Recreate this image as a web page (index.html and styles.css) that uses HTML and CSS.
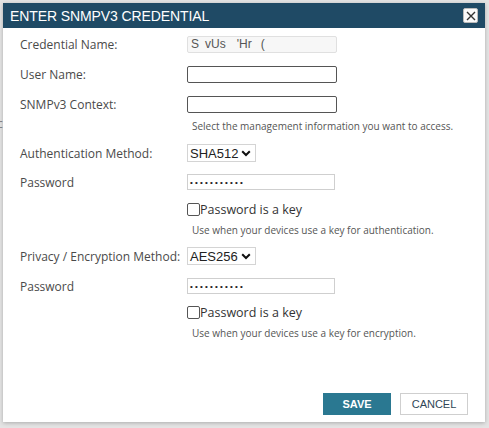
FILE: index.html
```html
<!DOCTYPE html>
<html>
<head>
<meta charset="utf-8">
<link rel="stylesheet" href="styles.css">
</head>
<body>
<span class="behind">c</span>
<div class="dialog">
  <div class="header">
    <span class="title">ENTER SNMPV3 CREDENTIAL</span>
    <span class="close"><svg width="10" height="10" viewBox="0 0 10 10"><path d="M1 1L9 9M9 1L1 9" stroke="#333" stroke-width="1.4" fill="none"/></svg></span>
  </div>
  <div class="form">
    <div class="row r1">
      <label class="label">Credential Name:</label>
      <div class="field disabled">S<span class="gap1"></span>vUs<span class="gap2"></span>'Hr<span class="gap3"></span>(</div>
    </div>
    <div class="row r2">
      <label class="label">User Name:</label>
      <div class="field dark"></div>
    </div>
    <div class="row r3">
      <label class="label">SNMPv3 Context:</label>
      <div class="field dark"></div>
    </div>
    <div class="hint h1">Select the management information you want to access.</div>
    <div class="row r4">
      <label class="label">Authentication Method:</label>
      <div class="select">SHA512<svg class="chev" width="10" height="7" viewBox="0 0 10 7"><path d="M1.2 1.2L5 5L8.8 1.2" stroke="#111" stroke-width="2" fill="none"/></svg></div>
    </div>
    <div class="row r5">
      <label class="label">Password</label>
      <div class="field pwd">&#8226;&#8226;&#8226;&#8226;&#8226;&#8226;&#8226;&#8226;&#8226;&#8226;&#8226;</div>
    </div>
    <div class="check c1"><span class="box"></span>Password is a key</div>
    <div class="hint h2">Use when your devices use a key for authentication.</div>
    <div class="row r6">
      <label class="label">Privacy / Encryption Method:</label>
      <div class="select">AES256<svg class="chev" width="10" height="7" viewBox="0 0 10 7"><path d="M1.2 1.2L5 5L8.8 1.2" stroke="#111" stroke-width="2" fill="none"/></svg></div>
    </div>
    <div class="row r7">
      <label class="label">Password</label>
      <div class="field pwd">&#8226;&#8226;&#8226;&#8226;&#8226;&#8226;&#8226;&#8226;&#8226;&#8226;&#8226;</div>
    </div>
    <div class="check c2"><span class="box"></span>Password is a key</div>
    <div class="hint h3">Use when your devices use a key for encryption.</div>
    <div class="buttons">
      <button class="btn save">SAVE</button>
      <button class="btn cancel">CANCEL</button>
    </div>
  </div>
</div>
</body>
</html>
```
FILE: styles.css
```css
html, body {
  margin: 0;
  padding: 0;
}
body {
  background: #e4e4e4;
  width: 489px;
  height: 428px;
  overflow: hidden;
  position: relative;
  padding-top: 3px;
  padding-left: 3px;
  box-sizing: border-box;
  font-family: "Open Sans", sans-serif;
}
.behind {
  position: absolute;
  left: -3px;
  top: 115px;
  font-size: 12px;
  color: #888;
}
.dialog {
  position: relative;
  width: 482px;
  height: 419px;
  background: #fff;
  box-shadow: 0 1px 4px rgba(0,0,0,0.25);
}
.header {
  height: 25px;
  background: #1f4a65;
  display: flex;
  align-items: center;
  justify-content: space-between;
  padding: 0 7px 0 7px;
}
.title {
  color: #fff;
  font-family: "Liberation Sans", Arial, sans-serif;
  font-size: 14px;
  letter-spacing: -0.1px;
}
.close {
  width: 13px;
  height: 13px;
  background: #fafafa;
  border: 1px solid #bbb;
  border-radius: 2px;
  display: flex;
  align-items: center;
  justify-content: center;
}
.form {
  padding: 8px 17px 0 17px;
  display: flex;
  flex-direction: column;
}
.row {
  display: flex;
  align-items: center;
}
.label {
  width: 167px;
  font-size: 12px;
  color: #4a4a4a;
}
.field {
  box-sizing: border-box;
  width: 150px;
  height: 17px;
  border: 1px solid #555;
  border-radius: 2px;
  font-family: "Liberation Sans", Arial, sans-serif;
  font-size: 12px;
  color: #444;
  padding-left: 3px;
  line-height: 15px;
  display: flex;
  align-items: center;
}
.field.disabled {
  background: #f7f7f7;
  border-color: #e0e0e0;
  color: #555;
}
.gap1 { display: inline-block; width: 6px; }
.gap2 { display: inline-block; width: 11px; }
.gap3 { display: inline-block; width: 9px; }
.field.dark {
  border-color: #555;
}
.field.pwd {
  width: 148px;
  height: 16px;
  border: 1px solid #cfcfcf;
  border-radius: 0;
  font-size: 8px;
  letter-spacing: 2.2px;
  color: #222;
  padding-left: 2px;
}
.select {
  box-sizing: border-box;
  height: 18px;
  border: 1px solid #d4d4d4;
  background: #fff;
  font-family: "Liberation Sans", Arial, sans-serif;
  font-size: 13px;
  color: #222;
  display: flex;
  align-items: center;
  padding: 0 4px 0 2px;
  gap: 3px;
}
.r1 { height: 17px; }
.r2 { height: 17px; margin-top: 13px; }
.r3 { height: 17px; margin-top: 13px; }
.r4 { height: 18px; margin-top: 11px; }
.r5 { height: 16px; margin-top: 12px; }
.r6 { height: 18px; margin-top: 10px; }
.r7 { height: 16px; margin-top: 13px; }
.hint {
  margin-left: 172px;
  font-size: 10px;
  color: #555;
  height: 14px;
  line-height: 14px;
  white-space: nowrap;
}
.h1 { margin-top: 6px; }
.h2 { margin-top: 6px; }
.h3 { margin-top: 6px; }
.check {
  margin-left: 167px;
  height: 16px;
  display: flex;
  align-items: center;
  font-size: 12.5px;
  color: #333;
}
.c1 { margin-top: 11px; }
.c2 { margin-top: 10px; }
.box {
  box-sizing: border-box;
  width: 13px;
  height: 13px;
  border: 1px solid #555;
  border-radius: 2px;
  background: #fff;
}
.buttons {
  display: flex;
  justify-content: flex-end;
  gap: 9px;
  margin-top: 53px;
  padding-right: 0;
}
.btn {
  box-sizing: border-box;
  width: 68px;
  height: 22px;
  font-family: "Liberation Sans", Arial, sans-serif;
  font-size: 11px;
  border-radius: 0;
  cursor: pointer;
}
.save {
  background: #2a7891;
  color: #fff;
  border: 1px solid #2a7891;
  font-weight: bold;
}
.cancel {
  background: #fff;
  color: #2f4656;
  border: 1px solid #cfcfcf;
}
```
